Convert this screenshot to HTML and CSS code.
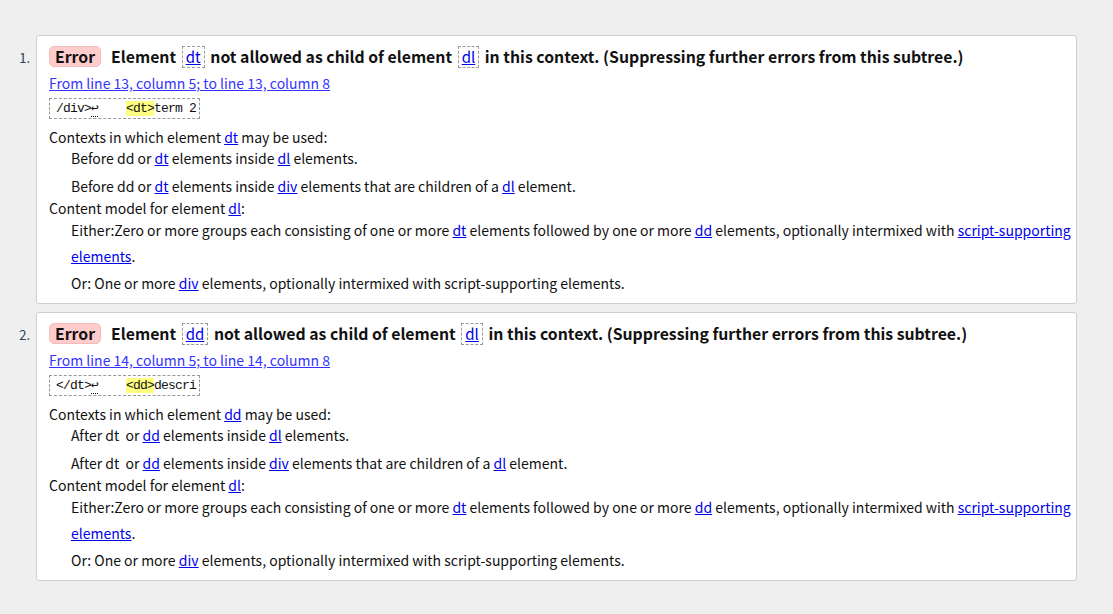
FILE: index.html
```html
<!DOCTYPE html>
<html>
<head>
<meta charset="utf-8">
<link rel="stylesheet" href="styles.css">
</head>
<body>
<ol class="messages">
  <li class="msg">
    <div class="card">
      <p class="head"><span class="badge">Error</span> <span class="title">Element <code class="ref"><a href="#">dt</a></code> not allowed as child of element <code class="ref"><a href="#">dl</a></code> in this context. (Suppressing further errors from this subtree.)</span></p>
      <p class="loc"><a href="#">From line 13, column 5; to line 13, column 8</a></p>
      <p class="extract"><code>/div&gt;<span class="lf">↩</span>&nbsp;&nbsp;&nbsp;&nbsp;<b class="hl">&lt;dt&gt;</b>term 2</code></p>
      <dl class="details">
        <dt>Contexts in which element <a href="#" class="c">dt</a> may be used:</dt>
        <dd class="ctx">Before dd or <a href="#" class="c">dt</a> elements inside <a href="#" class="c">dl</a> elements.</dd>
        <dd class="ctx last">Before dd or <a href="#" class="c">dt</a> elements inside <a href="#" class="c">div</a> elements that are children of a <a href="#" class="c">dl</a> element.</dd>
        <dt>Content model for element <a href="#" class="c">dl</a>:</dt>
        <dd class="model first">Either:Zero or more groups each consisting of one or more <a href="#" class="c">dt</a> elements followed by one or more <a href="#" class="c">dd</a> elements, optionally intermixed with <a href="#"><span class="nw">script-supporting</span> elements</a>.</dd>
        <dd class="model">Or: One or more <a href="#" class="c">div</a> elements, optionally intermixed with script-supporting elements.</dd>
      </dl>
    </div>
  </li>
  <li class="msg">
    <div class="card">
      <p class="head"><span class="badge">Error</span> <span class="title">Element <code class="ref"><a href="#">dd</a></code> not allowed as child of element <code class="ref"><a href="#">dl</a></code> in this context. (Suppressing further errors from this subtree.)</span></p>
      <p class="loc"><a href="#">From line 14, column 5; to line 14, column 8</a></p>
      <p class="extract"><code>&lt;/dt&gt;<span class="lf">↩</span>&nbsp;&nbsp;&nbsp;&nbsp;<b class="hl">&lt;dd&gt;</b>descri</code></p>
      <dl class="details">
        <dt>Contexts in which element <a href="#" class="c">dd</a> may be used:</dt>
        <dd class="ctx">After dt &nbsp;or <a href="#" class="c">dd</a> elements inside <a href="#" class="c">dl</a> elements.</dd>
        <dd class="ctx last">After dt &nbsp;or <a href="#" class="c">dd</a> elements inside <a href="#" class="c">div</a> elements that are children of a <a href="#" class="c">dl</a> element.</dd>
        <dt>Content model for element <a href="#" class="c">dl</a>:</dt>
        <dd class="model first">Either:Zero or more groups each consisting of one or more <a href="#" class="c">dt</a> elements followed by one or more <a href="#" class="c">dd</a> elements, optionally intermixed with <a href="#"><span class="nw">script-supporting</span> elements</a>.</dd>
        <dd class="model">Or: One or more <a href="#" class="c">div</a> elements, optionally intermixed with script-supporting elements.</dd>
      </dl>
    </div>
  </li>
</ol>
</body>
</html>
```

FILE: styles.css
```css
html, body {
  margin: 0;
  padding: 0;
  background: #efefef;
}
body {
  font-family: "Noto Sans CJK KR", "Noto Sans", sans-serif;
  font-size: 14px;
  color: #111;
}
.messages {
  margin: 0;
  padding: 35px 36px 0 36px;
  list-style: decimal outside;
}
.msg {
  margin-bottom: 8px;
  font-size: 13px;
  line-height: 1;
  color: #2c3e50;
}
.msg::marker {
  content: counter(list-item) ".\00a0\00a0";
}
.card {
  background: #fff;
  border: 1px solid #cfcfcf;
  border-radius: 3px;
  padding: 9px 4px 6px 12px;
  font-size: 14px;
  line-height: normal;
  color: #111;
}
p { margin: 0; }
a { color: #0000ee; }
.head {
  display: flex;
  align-items: center;
  height: 22px;
  font-size: 15.8px;
  font-weight: bold;
  white-space: nowrap;
}
.badge {
  display: inline-block;
  background: #ffcccc;
  border: 1px solid #f2bcbc;
  border-radius: 5px;
  padding: 0 5px;
  height: 19px;
  line-height: 19px;
  margin-right: 10px;
  color: #111;
}
.title { color: #111; }
.ref {
  display: inline-block;
  border: 1px dashed #999;
  padding: 0 3px;
  line-height: 20px;
  font-family: "Noto Sans CJK KR", sans-serif;
  font-weight: normal;
  font-size: 15px;
  margin: 0 2px;
}
.loc {
  margin-top: 5px;
  line-height: 22px;
  font-size: 14px;
}
.loc a { color: #3333ff; }
.extract {
  margin-top: 2px;
  line-height: 20px;
}
.extract code {
  display: inline-block;
  border: 1px dashed #999;
  padding: 0 3px 0 6px;
  font-family: "Liberation Mono", monospace;
  font-size: 13px;
  letter-spacing: -0.8px;
  line-height: 19px;
}
.lf {
  border-bottom: 1px dotted #000;
}
.hl {
  font-weight: normal;
  background: #ffff80;
}
.details {
  margin: 7px 0 0 0;
}
.details dt {
  line-height: 22px;
}
.details dd {
  margin: 0 0 0 22px;
}
.ctx {
  line-height: 21px;
  margin-bottom: 7px !important;
}
.ctx.last { margin-bottom: 0 !important; }
.model {
  line-height: 26px;
  margin-bottom: 1px !important;
}
.model.first { margin-top: -2px; }
.nw { white-space: nowrap; }
a.c { font-family: "Noto Sans CJK KR", sans-serif; }
```
